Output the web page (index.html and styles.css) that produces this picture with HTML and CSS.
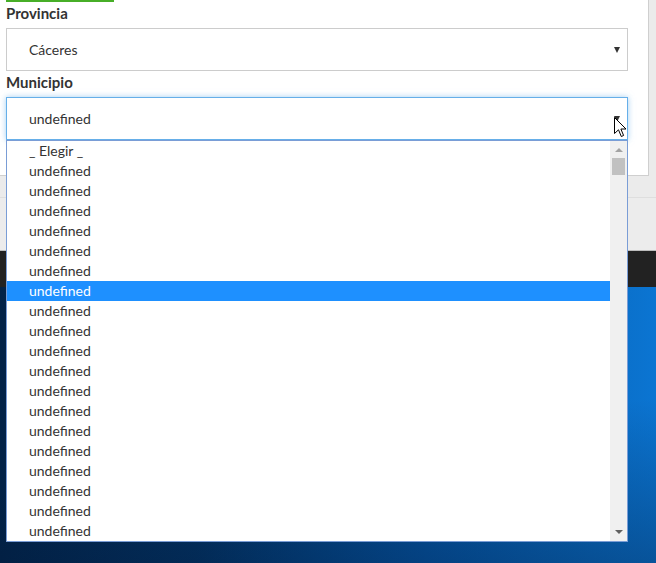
FILE: index.html
```html
<!DOCTYPE html>
<html lang="es">
<head>
<meta charset="utf-8">
<title>Municipio</title>
<link rel="stylesheet" href="styles.css">
</head>
<body>
<div class="screen">
  <div class="top">
    <div class="panel">
      <div class="accent"></div>
      <div class="field">
        <div class="label">Provincia</div>
        <div class="select">
          <span class="value">Cáceres</span>
          <span class="caret"></span>
        </div>
      </div>
      <div class="field">
        <div class="label">Municipio</div>
        <div class="select focused">
          <span class="value">undefined</span>
          <span class="caret"></span>
        </div>
      </div>
    </div>
    <div class="side"></div>
  </div>
  <div class="strip-a"></div>
  <div class="strip-b"></div>
  <div class="band"></div>
  <div class="desktop"></div>

  <div class="dropdown">
    <ul class="options">
      <li>_ Elegir _</li>
      <li>undefined</li>
      <li>undefined</li>
      <li>undefined</li>
      <li>undefined</li>
      <li>undefined</li>
      <li>undefined</li>
      <li class="active">undefined</li>
      <li>undefined</li>
      <li>undefined</li>
      <li>undefined</li>
      <li>undefined</li>
      <li>undefined</li>
      <li>undefined</li>
      <li>undefined</li>
      <li>undefined</li>
      <li>undefined</li>
      <li>undefined</li>
      <li>undefined</li>
      <li>undefined</li>
    </ul>
    <div class="scrollbar">
      <span class="arrow-up"></span>
      <span class="thumb"></span>
      <span class="track"></span>
      <span class="arrow-down"></span>
    </div>
  </div>

  <svg class="cursor" width="13" height="21" viewBox="0 0 13 21">
    <path d="M0.5 0.5 L0.5 16.5 L4.5 12.8 L7.3 19.5 L9.6 18.5 L6.9 12 L12 12 Z" fill="#fff" stroke="#000" stroke-width="1" stroke-linejoin="miter"/>
  </svg>
</div>
</body>
</html>
```
FILE: styles.css
```css
* { box-sizing: border-box; }
html, body { margin: 0; padding: 0; }
body {
  width: 656px;
  height: 563px;
  overflow: hidden;
  font-family: Lato, "Noto Sans", sans-serif;
  font-size: 14px;
  color: #333;
}
.screen {
  position: relative;
  width: 656px;
  height: 563px;
  display: flex;
  flex-direction: column;
}
.top {
  display: flex;
  height: 176px;
}
.panel {
  width: 649px;
  height: 176px;
  background: #fff;
  border-right: 1px solid #cfcfcf;
  border-bottom: 1px solid #cfcfcf;
  padding-left: 6px;
}
.side {
  flex: 1;
  background: #ebebeb;
}
.accent {
  width: 108px;
  height: 2px;
  background: #47ae27;
}
.field { width: 622px; }
.label {
  font-weight: 700;
  font-size: 15px;
  line-height: 20px;
  margin-top: 1px;
  margin-bottom: 5px;
}
.select {
  position: relative;
  height: 43px;
  border: 1px solid #ccc;
  background: #fff;
  display: flex;
  align-items: center;
  padding-left: 22px;
}
.select.focused {
  border-color: #66afe9;
  box-shadow: 0 0 6px rgba(102, 175, 233, 0.6);
}
.caret {
  margin-left: auto;
  margin-right: 7px;
  width: 0;
  height: 0;
  border-left: 3px solid transparent;
  border-right: 3px solid transparent;
  border-top: 6px solid #333;
}
.strip-a {
  height: 22px;
  background: #ebebeb;
  border-bottom: 1px solid #dedede;
}
.strip-b {
  height: 53px;
  background: #ececec;
  border-bottom: 1px solid #bdbdbd;
}
.band {
  height: 36px;
  background: #222;
}
.desktop {
  flex: 1;
  background:
    linear-gradient(172deg, rgba(0,0,0,0) 0%, rgba(0,0,0,0) 55%, rgba(0,20,50,0.35) 100%),
    linear-gradient(90deg, #022247 0%, #03305f 30%, #0553a0 65%, #0a6cc4 90%, #0b75d2 100%);
}
.dropdown {
  position: absolute;
  left: 6px;
  top: 140px;
  width: 622px;
  height: 402px;
  border: 1px solid #7a9dd6;
  background: #fff;
  display: flex;
}
.options {
  list-style: none;
  margin: 0;
  padding: 0;
  flex: 1;
}
.options li {
  height: 20px;
  line-height: 20px;
  padding-left: 22px;
  white-space: nowrap;
}
.options li.active {
  background: #1e90ff;
  color: #fff;
}
.scrollbar {
  width: 17px;
  background: #f0f0f0;
  display: flex;
  flex-direction: column;
  align-items: center;
}
.arrow-up {
  margin-top: 7px;
  width: 0;
  height: 0;
  border-left: 4px solid transparent;
  border-right: 4px solid transparent;
  border-bottom: 4px solid #a3a3a3;
}
.thumb {
  margin-top: 6px;
  width: 13px;
  height: 17px;
  background: #c1c1c1;
}
.track { flex: 1; }
.arrow-down {
  margin-bottom: 7px;
  width: 0;
  height: 0;
  border-left: 4px solid transparent;
  border-right: 4px solid transparent;
  border-top: 4px solid #606060;
}
.cursor {
  position: absolute;
  left: 614px;
  top: 117px;
}
```
